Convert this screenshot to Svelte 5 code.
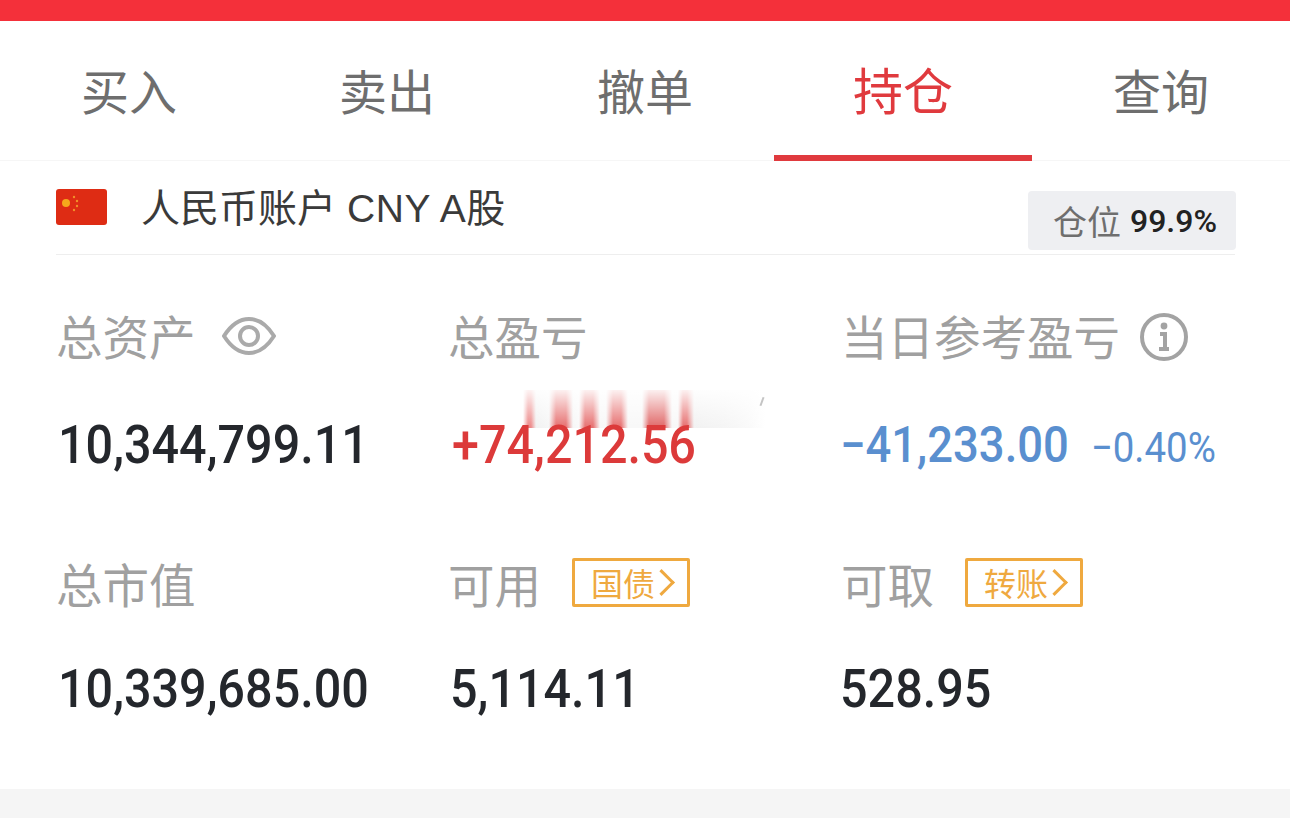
<script>
	const tabs = [
		{ label: '买入' },
		{ label: '卖出' },
		{ label: '撤单' },
		{ label: '持仓', active: true },
		{ label: '查询' }
	];
</script>

<div class="page">
	<div class="topbar"></div>

	<nav class="tabs">
		{#each tabs as tab}
			<div class="tab" class:active={tab.active}>{tab.label}</div>
		{/each}
	</nav>

	<section class="account">
		<div class="account-row">
			<svg class="flag" viewBox="0 0 51 36" aria-hidden="true">
				<rect width="51" height="36" rx="3" fill="#de2c14" />
				<circle cx="10" cy="14" r="4" fill="#f5a81c" />
				<circle cx="18" cy="8" r="1.2" fill="#f0902a" />
				<circle cx="21" cy="12" r="1.2" fill="#f0902a" />
				<circle cx="21" cy="17" r="1.2" fill="#f0902a" />
				<circle cx="18" cy="21" r="1.2" fill="#f0902a" />
			</svg>
			<span class="account-name">人民币账户<span class="latin">CNY A</span>股</span>
			<span class="badge">仓位 <b>99.9%</b></span>
		</div>

		<div class="stats">
			<div class="stat">
				<div class="label">总资产
					<svg class="eye" viewBox="0 0 54 38" aria-hidden="true">
						<path d="M2 19C9 8 17 2 27 2s18 6 25 17c-7 11-15 17-25 17S9 30 2 19Z" />
						<circle cx="27" cy="19" r="9" />
					</svg>
				</div>
				<div class="value">10,344,799.11</div>
			</div>
			<div class="stat">
				<div class="label">总盈亏</div>
				<div class="value red">+74,212.56</div>
				<div class="smear"></div>
			</div>
			<div class="stat third">
				<div class="label">当日参考盈亏
					<svg class="info" viewBox="0 0 48 48" aria-hidden="true">
						<circle cx="24" cy="24" r="22" />
						<circle class="dot" cx="24" cy="13" r="3.4" />
						<path d="M20 21h5v15M19 36h10" />
					</svg>
				</div>
				<div class="value blue">−41,233.00<span class="pct">−0.40%</span></div>
			</div>
			<div class="stat second">
				<div class="label">总市值</div>
				<div class="value">10,339,685.00</div>
			</div>
			<div class="stat second">
				<div class="label">可用<span class="tag">国债<i></i></span></div>
				<div class="value">5,114.11</div>
			</div>
			<div class="stat second third">
				<div class="label">可取<span class="tag">转账<i></i></span></div>
				<div class="value">528.95</div>
			</div>
		</div>
	</section>

	<div class="footer"></div>
</div>

<style>
	:global(body) {
		background: #fff;
	}

	.page {
		width: 1290px;
		height: 818px;
		display: flex;
		flex-direction: column;
		overflow: hidden;
		font-family: "Noto Sans CJK SC", "Noto Sans", sans-serif;
		background: #fff;
	}

	.topbar {
		flex: none;
		height: 21px;
		background: #f4303a;
	}

	.tabs {
		flex: none;
		display: grid;
		grid-template-columns: repeat(5, 258px);
		height: 140px;
		border-bottom: 1px solid #f6f6f6;
		box-sizing: border-box;
	}

	.tab {
		display: flex;
		align-items: center;
		justify-content: center;
		padding-bottom: 4px;
		font-size: 48px;
		color: #6e6e6e;
		box-sizing: border-box;
	}

	.tab.active {
		color: #e03a3e;
		font-size: 50px;
		border-bottom: 6px solid #e03a3e;
		padding-bottom: 0;
		margin-bottom: -1px;
	}

	.account {
		flex: 1;
		min-height: 0;
		padding: 0 55px 0 56px;
	}

	.account-row {
		height: 94px;
		display: flex;
		align-items: flex-start;
		border-bottom: 1px solid #eee;
		box-sizing: border-box;
	}

	.flag {
		width: 51px;
		height: 36px;
		margin-top: 28px;
		flex: none;
	}

	.account-name {
		margin-left: 34px;
		margin-top: 16px;
		font-size: 39px;
		line-height: 56px;
		color: #3a3a3a;
		white-space: nowrap;
	}

	.latin {
		margin-left: 11px;
		font-family: "Liberation Sans", sans-serif;
		letter-spacing: 0.6px;
		font-size: 39px;
	}

	.badge {
		margin-left: auto;
		margin-top: 30px;
		margin-right: -1px;
		padding-left: 6px;
		width: 208px;
		height: 59px;
		display: flex;
		align-items: center;
		justify-content: center;
		gap: 9px;
		background: #eeeff2;
		border-radius: 4px;
		font-size: 34px;
		color: #6e6e6e;
		white-space: nowrap;
		box-sizing: border-box;
	}

	.badge b {
		font-family: Roboto, sans-serif;
		font-weight: 500;
		font-size: 32px;
		color: #222;
	}

	.stats {
		display: grid;
		grid-template-columns: 392px 393px 1fr;
		grid-auto-rows: 248px;
		padding: 46px 0 0 2px;
	}

	.stat {
		position: relative;
	}

	.label {
		display: flex;
		align-items: center;
		height: 66px;
		margin-left: -2px;
		font-size: 46.5px;
		color: #a0a0a0;
		white-space: nowrap;
	}

	/* the original digits are tall and narrow, Roboto squeezed gets close */
	.value {
		position: relative;
		z-index: 1;
		margin-top: 48px;
		display: flex;
		align-items: baseline;
		width: max-content;
		font-family: Roboto, sans-serif;
		font-weight: 500;
		font-size: 53px;
		line-height: 60px;
		color: #24272c;
		white-space: nowrap;
		font-variant-numeric: tabular-nums;
		transform: scaleX(0.915);
		transform-origin: left center;
	}

	.second .value {
		margin-top: 44px;
	}

	.third .value {
		margin-left: -3px;
	}

	.red {
		color: #dc3a3a;
		margin-left: 2px;
	}

	.blue {
		color: #5a8fcf;
		font-size: 49.6px;
	}

	.pct {
		margin-left: 24px;
		font-size: 42px;
		font-weight: 400;
	}

	.eye {
		width: 54px;
		height: 38px;
		margin-left: 26px;
		margin-top: 4px;
		fill: none;
		stroke: #aaa;
		stroke-width: 4;
	}

	.info {
		width: 48px;
		height: 48px;
		margin-left: 20px;
		margin-top: 6px;
		fill: none;
		stroke: #a3a3a3;
		stroke-width: 4;
	}

	.info .dot {
		fill: #a3a3a3;
		stroke: none;
	}

	.tag {
		margin-left: 31px;
		width: 118px;
		height: 49px;
		display: flex;
		align-items: center;
		justify-content: center;
		gap: 3px;
		box-sizing: border-box;
		border: 3px solid #efa93f;
		border-radius: 2px;
		font-size: 32px;
		color: #efa93f;
	}

	.tag i {
		width: 19px;
		height: 19px;
		margin-left: -6px;
		border-top: 3px solid #efa93f;
		border-right: 3px solid #efa93f;
		transform: rotate(45deg);
		box-sizing: border-box;
	}

	/* redaction smear sitting behind the figure */
	.smear {
		position: absolute;
		left: 73px;
		top: 89px;
		width: 242px;
		height: 38px;
		background:
			linear-gradient(to bottom, rgba(255,255,255,0.92), rgba(255,255,255,0.2)),
			linear-gradient(to right, #fff 0, #e86a6a 5px, #e86a6a 8px, #eee 13px, #f4f4f4 26px, #e04a4a 33px, #e04a4a 43px, #f4f4f4 50px, #f8f8f8 56px, #e04a4a 62px, #e04a4a 70px, #f6f6f6 77px, #f6f6f6 83px, #e04a4a 90px, #e04a4a 98px, #f6f6f6 105px, #f6f6f6 119px, #d84040 126px, #d84040 141px, #f6f6f6 149px, #f6f6f6 155px, #e04a4a 160px, #e04a4a 164px, #eee 171px, #f2f2f2 200px, #f8f8f8 225px, #fff 242px);
	}

	.smear::after {
		content: '';
		position: absolute;
		right: 2px;
		top: 7px;
		width: 2px;
		height: 9px;
		background: #c4c4c4;
		transform: rotate(20deg);
	}

	.footer {
		flex: none;
		height: 29px;
		background: #f5f5f5;
	}
</style>
